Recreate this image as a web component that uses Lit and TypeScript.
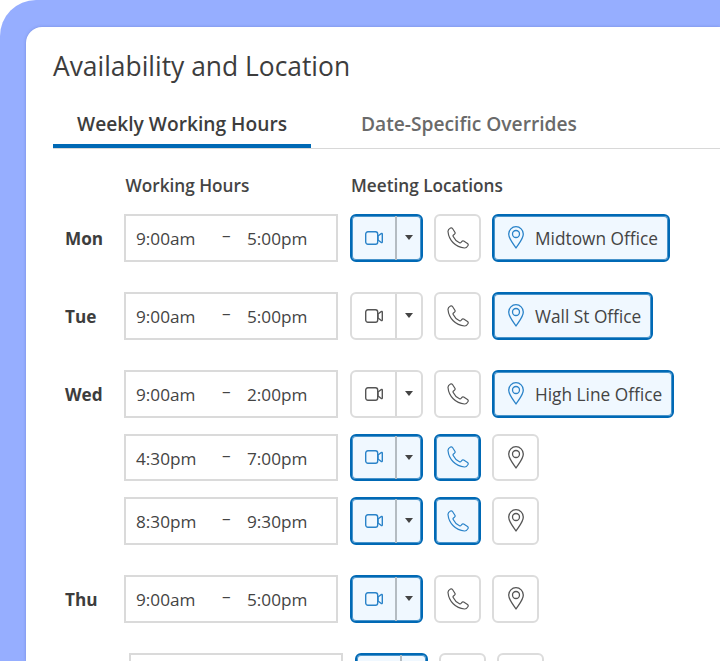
import { LitElement, css, html, nothing } from "lit";
import { customElement } from "lit/decorators.js";

type Slot = {
  from: string;
  to: string;
  video?: boolean;
  phone?: boolean;
  office?: string;
  officeOn?: boolean;
};

type Day = { name?: string; shifted?: boolean; slots: Slot[] };

const DAYS: Day[] = [
  { name: "Mon", slots: [{ from: "9:00am", to: "5:00pm", video: true, office: "Midtown Office", officeOn: true }] },
  { name: "Tue", slots: [{ from: "9:00am", to: "5:00pm", office: "Wall St Office", officeOn: true }] },
  {
    name: "Wed",
    slots: [
      { from: "9:00am", to: "2:00pm", office: "High Line Office", officeOn: true },
      { from: "4:30pm", to: "7:00pm", video: true, phone: true },
      { from: "8:30pm", to: "9:30pm", video: true, phone: true },
    ],
  },
  { name: "Thu", slots: [{ from: "9:00am", to: "5:00pm", video: true }] },
  { shifted: true, slots: [{ from: "", to: "", video: true }] },
];

const videoIcon = html`<svg class="video" viewBox="0 0 18 14" fill="none" stroke="currentColor" stroke-width="1.4">
  <rect x="0.7" y="0.8" width="12" height="12.4" rx="2.2"></rect>
  <path d="M13 5 16 2.700q1.300-.8 1.300.6v7.400q0 1.400-1.300.6L13 9Z" stroke-linejoin="round"></path>
</svg>`;

const phoneIcon = html`<svg class="phone" viewBox="0 0 22 22" fill="none" stroke="currentColor" stroke-width="1.2" stroke-linejoin="round">
  <path d="M1 4.500C.9 3 2.200 1.700 3.500 1 4.300.6 5 .8 5.500 1.500L7.900 5.300C8.300 6 8.200 6.600 7.600 7.100L6.500 8C6 8.400 5.900 8.900 6.200 9.500 7.500 12.200 9.800 14.500 12.500 15.800 13.100 16.100 13.600 16 14 15.500L14.900 14.400C15.400 13.800 16 13.700 16.700 14.100L20.500 16.500C21.200 17 21.400 17.700 21 18.500 20.300 19.800 19 21.100 17.500 21 8.600 20.200 1.800 13.400 1 4.500Z"></path>
</svg>`;

const pinIcon = html`<svg class="pin" viewBox="0 0 16 23" fill="none" stroke="currentColor" stroke-width="1.3" stroke-linejoin="round">
  <path d="M8 22C6.200 18.600 .7 13.200 .7 8A7.300 7.300 0 0 1 15.300 8C15.300 13.200 9.800 18.600 8 22Z"></path>
  <circle cx="8" cy="8" r="3.500"></circle>
</svg>`;

@customElement("app-root")
export class AppRoot extends LitElement {
  renderSlot(slot: Slot) {
    return html`
      <div class="slot">
        <div class="hours">
          <span class="time">${slot.from}</span>
          ${slot.from ? html`<span class="dash">–</span>` : nothing}
          <span class="time">${slot.to}</span>
        </div>
        <div class="split btn ${slot.video ? "on" : ""}">
          <span class="main">${videoIcon}</span>
          <span class="caret"></span>
        </div>
        <div class="square btn ${slot.phone ? "on" : ""}">${phoneIcon}</div>
        ${slot.office
          ? html`<div class="office btn ${slot.officeOn ? "on" : ""}">${pinIcon}<span class="label">${slot.office}</span></div>`
          : html`<div class="square btn">${pinIcon}</div>`}
      </div>
    `;
  }

  render() {
    return html`
      <div class="panel">
        <div class="card">
          <h1>Availability and Location</h1>
          <div class="tabs">
            <div class="tab active">Weekly Working Hours</div>
            <div class="tab">Date-Specific Overrides</div>
          </div>
          <div class="heads">
            <span class="head-hours">Working Hours</span>
            <span>Meeting Locations</span>
          </div>
          <div class="days">
            ${DAYS.map(
              (day) => html`
                <div class="day ${day.shifted ? "shifted" : ""}">
                  <div class="name">${day.name}</div>
                  <div class="slots">${day.slots.map((s) => this.renderSlot(s))}</div>
                </div>
              `
            )}
          </div>
        </div>
      </div>
    `;
  }

  static styles = css`
    :host {
      display: block;
      width: 720px;
      height: 661px;
      overflow: hidden;
      background: #fff;
      font-family: "Open Sans", "Noto Sans", sans-serif;
      color: #333;
    }

    .panel {
      height: 661px;
      box-sizing: border-box;
      padding: 27px 0 0 26px;
      background: #96aeff;
      border-top-left-radius: 36px;
      overflow: hidden;
    }

    .card {
      height: 634px;
      box-sizing: border-box;
      padding: 0 0 0 27px;
      background: #fff;
      border-top-left-radius: 16px;
      box-shadow: 0 0 3px rgba(60, 80, 160, 0.35);
      overflow: hidden;
    }

    h1 {
      margin: 0;
      padding-top: 21px;
      height: 64px;
      box-sizing: border-box;
      font-size: 26.4px;
      line-height: 37px;
      font-weight: 400;
      color: #3d3d3d;
      white-space: nowrap;
    }

    .tabs {
      display: flex;
      height: 58px;
      box-sizing: border-box;
      border-bottom: 1px solid #d8d8d8;
    }

    .tab {
      padding: 16px 24px 0;
      height: 57px;
      box-sizing: border-box;
      font-size: 19.2px;
      line-height: 33px;
      font-weight: 600;
      color: #6a6a6a;
      white-space: nowrap;
    }

    .tab.active {
      color: #3d3d3d;
      width: 258px;
      border-bottom: 4px solid #0069b5;
    }

    .tab + .tab {
      padding-left: 50px;
    }

    .heads {
      display: flex;
      height: 65px;
      box-sizing: border-box;
      padding: 25px 0 0 72.5px;
      font-size: 17.2px;
      line-height: 24px;
      font-weight: 600;
      color: #444;
      white-space: nowrap;
    }

    .head-hours {
      width: 225.5px;
    }

    .days {
      display: flex;
      flex-direction: column;
      gap: 30.5px;
    }

    .day {
      display: flex;
    }

    .day.shifted {
      margin-left: 5px;
    }

    .name {
      width: 71px;
      height: 47.5px;
      box-sizing: border-box;
      padding-left: 12px;
      font-size: 17.2px;
      line-height: 49px;
      font-weight: 700;
      color: #3d3d3d;
    }

    .slots {
      display: flex;
      flex-direction: column;
      gap: 16px;
    }

    .slot {
      display: flex;
      align-items: stretch;
      height: 47.5px;
    }

    .hours {
      display: flex;
      align-items: center;
      width: 214px;
      box-sizing: border-box;
      padding: 2px 0 0 10px;
      margin-right: 12px;
      border: 2px solid #dadada;
      font-size: 17.2px;
      color: #444;
    }

    .time {
      white-space: nowrap;
    }

    .time:first-child {
      width: 86px;
    }

    .dash {
      width: 25px;
      position: relative;
      top: -4px;
    }

    .btn {
      box-sizing: border-box;
      display: flex;
      align-items: center;
      justify-content: center;
      border: 2px solid #dcdcdc;
      border-radius: 6px;
      background: #fff;
      color: #555;
    }

    .btn.on {
      border-color: #0069b5;
      box-shadow: inset 0 0 0 1px rgba(0, 105, 181, 0.7);
      background: #f0f8ff;
      color: #2a83c9;
    }

    .split {
      width: 73px;
      margin-right: 11px;
      justify-content: flex-start;
    }

    .main {
      flex: 1;
      align-self: stretch;
      display: flex;
      align-items: center;
      justify-content: center;
      border-right: 2px solid #d9d9d9;
    }

    .split.on .main {
      border-right-color: #b4bcc2;
    }

    .caret {
      width: 24px;
      display: flex;
      justify-content: center;
    }

    .caret::before {
      content: "";
      border-left: 4.5px solid transparent;
      border-right: 4.5px solid transparent;
      border-top: 5px solid #444;
    }

    .square {
      width: 47px;
      margin-right: 11px;
    }

    .office.btn {
      gap: 11px;
      padding: 0 10px 0 14px;
      font-size: 17.3px;
      color: #444;
      white-space: nowrap;
    }

    .label {
      padding-top: 2px;
    }

    .office svg {
      color: #2a83c9;
    }

    .video {
      width: 18px;
      height: 14px;
    }

    .phone {
      width: 22px;
      height: 22px;
    }

    .pin {
      width: 16px;
      height: 23px;
    }
  `;
}
